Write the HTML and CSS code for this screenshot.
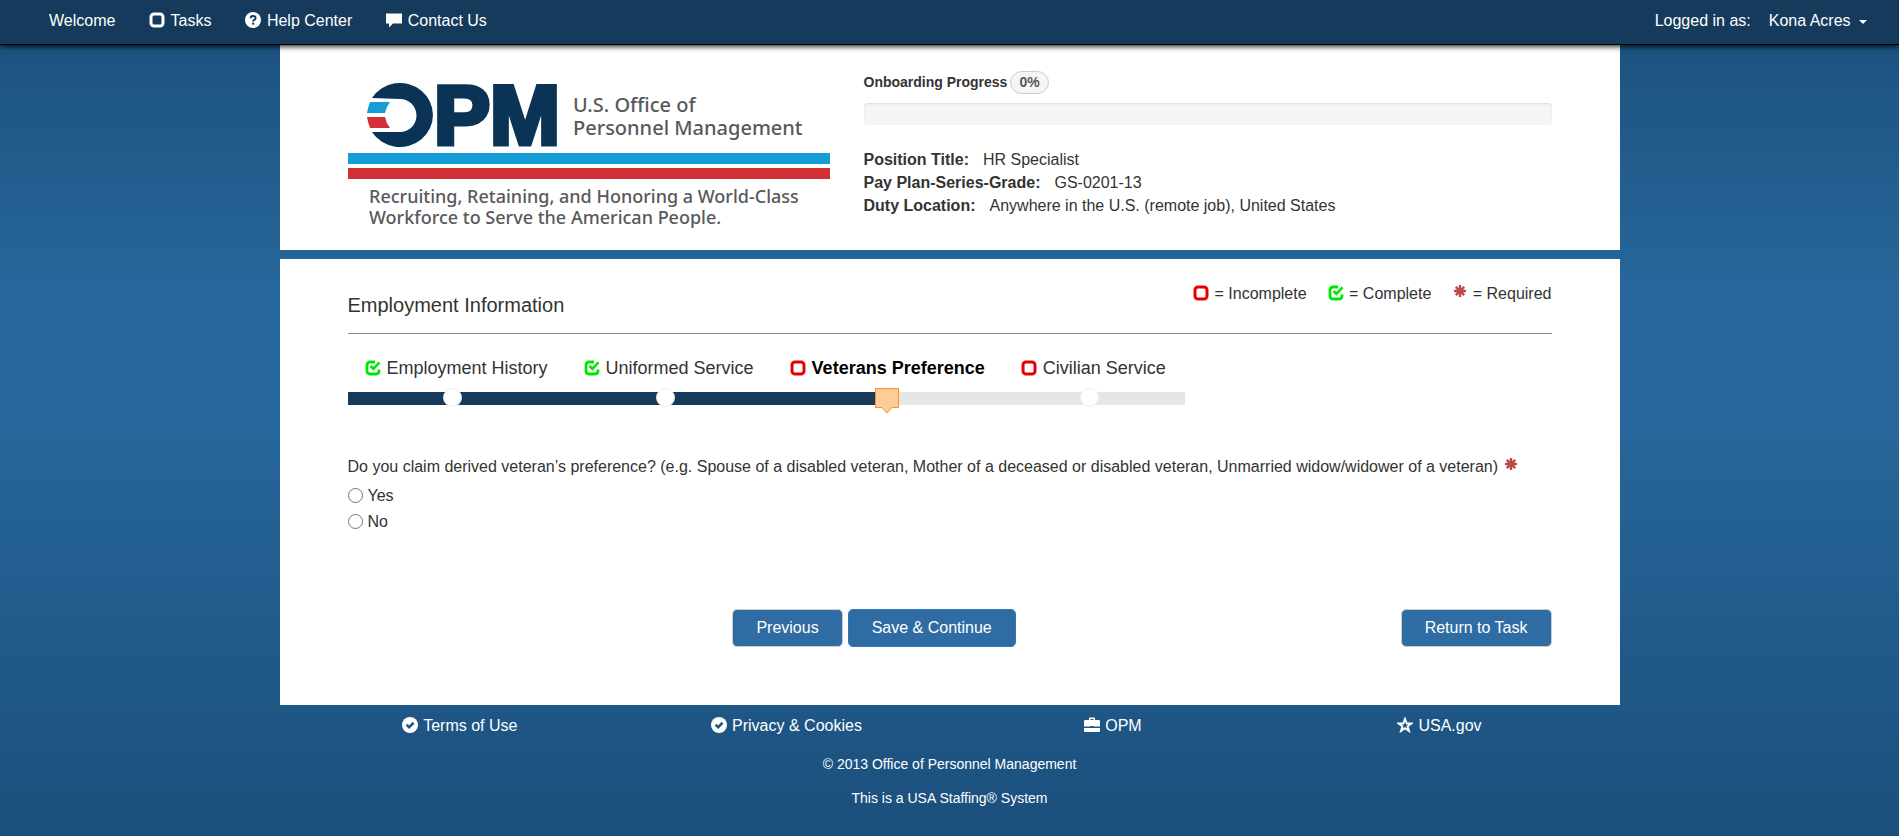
FILE: index.html
```
<!DOCTYPE html>
<html lang="en">
  <head>
    <meta charset="UTF-8" />
    <meta name="viewport" content="width=device-width, initial-scale=1.0" />
    <title>Veterans Preference - USA Staffing Onboarding</title>
    <link rel="stylesheet" href="styles.css">
  </head>
  <body>
    <!-- Shared icons -->
    <svg class="sprite" aria-hidden="true">
      <symbol id="unchecked" viewBox="0 0 16 16">
        <rect x="2" y="2" width="12" height="12" rx="3" fill="none" stroke="currentColor" stroke-width="3" />
      </symbol>
      <symbol id="check" viewBox="0 0 16 16">
        <path d="M10 2H5Q2 2 2 5V11Q2 14 5 14H11Q14 14 14 11V9.500" fill="none" stroke="currentColor" stroke-width="2.800" />
        <path d="M5.500 6L8.400 8.800L14.500 2.400" fill="none" stroke="currentColor" stroke-width="2.600" />
      </symbol>
      <symbol id="question" viewBox="0 0 16 16">
        <circle cx="8" cy="8" r="8" fill="currentColor" />
        <path d="M5.600 6.300Q5.600 3.900 8.100 3.900Q10.600 3.900 10.600 5.900Q10.600 7.100 9.300 7.800Q8.200 8.400 8.200 9.500" fill="none" stroke="#153a5b" stroke-width="2" />
        <path d="M7.100 10.600h2.200v2h-2.200z" fill="#153a5b" />
      </symbol>
      <symbol id="comment" viewBox="0 0 16 16">
        <path d="M0 1.500H16V11.500H7L3 15.500V11.500H0Z" fill="currentColor" />
      </symbol>
      <symbol id="ok" viewBox="0 0 16 16">
        <circle cx="8" cy="8" r="8" fill="currentColor" />
        <path d="M4.600 7.700L7.200 10.100L11.600 5.800" fill="none" stroke="#20598a" stroke-width="2.600" />
      </symbol>
      <symbol id="briefcase" viewBox="0 0 16 16">
        <path d="M5 3V1.500Q5 .5 6 .5H10Q11 .5 11 1.500V3H15Q16 3 16 4V9.500H9.500V9H6.500V9.500H0V4Q0 3 1 3ZM6.500 3H9.500V2H6.500ZM0 11H16V14Q16 15 15 15H1Q0 15 0 14Z" fill="currentColor" />
      </symbol>
      <symbol id="star" viewBox="0 0 16 16">
        <path d="M8 1.800L9.700 6.500H14.300L10.600 9.300L12 14L8 11.200L4 14L5.400 9.300L1.700 6.500H6.300Z" fill="none" stroke="currentColor" stroke-width="1.900" />
      </symbol>
      <symbol id="asterisk" viewBox="0 0 16 16">
        <path d="M8 2V14M2 8H14M3.800 3.800L12.200 12.200M12.200 3.800L3.800 12.200" stroke="currentColor" stroke-width="2.400" />
      </symbol>
    </svg>

    <!-- Top Navigation -->
    <nav class="navbar">
      <ul class="nav">
        <li><a href="#">Welcome</a></li>
        <li><a href="#"><svg class="icon"><use href="#unchecked" /></svg> Tasks</a></li>
        <li><a href="#"><svg class="icon"><use href="#question" /></svg> Help Center</a></li>
        <li><a href="#"><svg class="icon"><use href="#comment" /></svg> Contact Us</a></li>
      </ul>
      <div class="user">
        <span>Logged in as:</span>
        <button type="button" class="user-menu">Kona Acres <span class="caret"></span></button>
      </div>
    </nav>

    <div class="container">
      <!-- Agency / Position Header -->
      <header class="panel agency">
        <svg class="logo" viewBox="0 -30 482 178" role="img" aria-label="U.S. Office of Personnel Management">
          <path d="M24 15A33 32 0 1 1 24 49H52A16 16 0 0 0 52 16Z" fill="#0a3355" />
          <path d="M22 19H42Q38 24 37 30H19Q20 24 22 19Z" fill="#149dd6" />
          <path d="M19 34H37Q38 40 42 45H22Q20 40 19 34Z" fill="#d22f37" />
          <text class="logo-letters" x="86" y="61">PM</text>
          <text class="logo-name" x="225" y="29">U.S. Office of</text>
          <text class="logo-name" x="225" y="52">Personnel Management</text>
          <rect x="0" y="70" width="482" height="11" fill="#149dd6" />
          <rect x="0" y="85" width="482" height="11" fill="#d22f37" />
          <text class="logo-tagline" x="21" y="120">Recruiting, Retaining, and Honoring a World-Class</text>
          <text class="logo-tagline" x="21" y="141">Workforce to Serve the American People.</text>
        </svg>

        <div class="position">
          <div class="progress-label">Onboarding Progress <span class="badge">0%</span></div>
          <div class="progress"></div>
          <dl class="details">
            <div><dt>Position Title:</dt><dd>HR Specialist</dd></div>
            <div><dt>Pay Plan-Series-Grade:</dt><dd>GS-0201-13</dd></div>
            <div><dt>Duty Location:</dt><dd>Anywhere in the U.S. (remote job), United States</dd></div>
          </dl>
        </div>
      </header>

      <!-- Questionnaire -->
      <main class="panel content">
        <div class="title-row">
          <h1>Employment Information</h1>
          <ul class="legend">
            <li><svg class="icon incomplete"><use href="#unchecked" /></svg> = Incomplete</li>
            <li><svg class="icon complete"><use href="#check" /></svg> = Complete</li>
            <li><svg class="icon required"><use href="#asterisk" /></svg> = Required</li>
          </ul>
        </div>

        <ol class="steps">
          <li class="done">
            <a href="#"><svg class="icon complete"><use href="#check" /></svg> Employment History</a>
            <div class="track"><span class="dot"></span></div>
          </li>
          <li class="done">
            <a href="#"><svg class="icon complete"><use href="#check" /></svg> Uniformed Service</a>
            <div class="track"><span class="dot"></span></div>
          </li>
          <li class="current">
            <a href="#"><svg class="icon incomplete"><use href="#unchecked" /></svg> Veterans Preference</a>
            <div class="track">
              <svg class="pointer" viewBox="0 0 24 26">
                <path d="M.5 .5H23.500V19.500H17L12 25L7 19.500H.5Z" fill="#fdcc99" stroke="#f7931e" />
              </svg>
            </div>
          </li>
          <li>
            <a href="#"><svg class="icon incomplete"><use href="#unchecked" /></svg> Civilian Service</a>
            <div class="track"><span class="dot"></span></div>
          </li>
        </ol>

        <form>
          <fieldset>
            <legend>Do you claim derived veteran’s preference? (e.g. Spouse of a disabled veteran, Mother of a deceased or disabled veteran, Unmarried widow/widower of a veteran) <svg class="icon required"><use href="#asterisk" /></svg></legend>
            <label class="choice"><input type="radio" name="derived" value="yes"> Yes</label>
            <label class="choice"><input type="radio" name="derived" value="no"> No</label>
          </fieldset>

          <div class="buttons">
            <div class="main-buttons">
              <button type="button" class="btn">Previous</button>
              <button type="submit" class="btn btn-primary">Save &amp; Continue</button>
            </div>
            <button type="button" class="btn">Return to Task</button>
          </div>
        </form>
      </main>

      <!-- Footer -->
      <footer>
        <ul class="footer-links">
          <li><a href="#"><svg class="icon"><use href="#ok" /></svg> Terms of Use</a></li>
          <li><a href="#"><svg class="icon"><use href="#ok" /></svg> Privacy &amp; Cookies</a></li>
          <li><a href="#"><svg class="icon"><use href="#briefcase" /></svg> OPM</a></li>
          <li><a href="#"><svg class="icon"><use href="#star" /></svg> USA.gov</a></li>
        </ul>
        <p>© 2013 Office of Personnel Management</p>
        <p>This is a USA Staffing® System</p>
      </footer>
    </div>
  </body>
</html>
```
FILE: styles.css
```
* {
  box-sizing: border-box;
}

body {
  margin: 0;
  min-height: 100vh;
  font-family: "Liberation Sans", Arial, sans-serif;
  font-size: 16px;
  line-height: 24px;
  color: #333;
  background: linear-gradient(#1b4f7c, #27679b 35%, #27679b 50%, #1b4f7c);
}

ul,
ol,
dl,
dd,
p,
h1 {
  margin: 0;
  padding: 0;
  list-style: none;
}

a {
  color: inherit;
  text-decoration: none;
}

a:hover {
  text-decoration: underline;
}

.sprite {
  position: absolute;
  width: 0;
  height: 0;
}

.icon {
  width: 16px;
  height: 16px;
  margin-right: 1px;
  vertical-align: -2px;
}

.incomplete {
  color: #e60000;
}

.complete {
  color: #00e600;
}

.required {
  margin-right: 0;
  color: #b94a48;
  vertical-align: 0;
}

/* Top navigation */
.navbar {
  position: relative;
  display: flex;
  justify-content: space-between;
  height: 45px;
  padding: 9px 32px;
  color: #fff;
  background: #153a5b;
  border-bottom: 1px solid #000;
  box-shadow: 0 1px 6px #000;
}

.nav {
  display: flex;
}

.nav a {
  padding: 0 17px;
}

.user {
  display: flex;
  gap: 18px;
  align-items: flex-start;
}

.user-menu {
  padding: 0;
  font: inherit;
  color: inherit;
  background: none;
  border: 0;
}

.caret {
  display: inline-block;
  margin-left: 4px;
  vertical-align: middle;
  border-top: 4px solid #fff;
  border-right: 4px solid transparent;
  border-left: 4px solid transparent;
}

/* Panels */
.container {
  max-width: 1340px;
  margin: 0 auto;
}

.panel {
  padding-right: 68px;
  padding-left: 68px;
  background: #fff;
}

.agency {
  display: flex;
  gap: 34px;
  align-items: flex-start;
  padding-top: 8px;
  padding-bottom: 19px;
  margin-bottom: 9px;
}

.logo {
  flex: 0 0 482px;
  height: 178px;
}

.logo text {
  font-family: "Noto Sans", sans-serif;
  font-weight: 500;
  fill: #58595b;
}

.logo .logo-letters {
  font-family: "Liberation Sans", Arial, sans-serif;
  font-size: 84px;
  font-weight: bold;
  fill: #0a3355;
  stroke: #0a3355;
  stroke-width: 5px;
}

.logo .logo-name {
  font-size: 20px;
}

.logo .logo-tagline {
  font-size: 18px;
}

.position {
  flex: 1;
  padding-top: 17px;
}

.progress-label {
  display: flex;
  gap: 3px;
  align-items: center;
  font-size: 14px;
  font-weight: bold;
}

.badge {
  padding: 0 8px;
  line-height: 21px;
  color: #555;
  background: #f5f5f5;
  border: 1px solid #ccc;
  border-radius: 12px;
}

.progress {
  height: 22px;
  margin: 9px 0 23px;
  background: #f5f5f5;
  border-radius: 4px;
  box-shadow: inset 0 1px 2px rgba(0, 0, 0, 0.1);
}

.details {
  line-height: 23px;
}

.details div {
  display: flex;
  gap: 14px;
}

.details dt {
  font-weight: bold;
}

.content {
  padding-top: 23px;
  padding-bottom: 58px;
}

.title-row {
  display: flex;
  justify-content: space-between;
  padding-bottom: 16px;
  border-bottom: 1px solid #888;
}

h1 {
  margin-top: 11px;
  font-size: 20px;
  font-weight: normal;
}

.legend {
  display: flex;
  gap: 21px;
}

/* Step tracker */
.steps {
  display: flex;
  margin-top: 22px;
  font-size: 18px;
}

.steps a {
  display: block;
  padding: 0 19px 0 17px;
}

.track {
  position: relative;
  height: 13px;
  margin-top: 12px;
  background: #e6e6e6;
}

.done .track {
  background: #153a5b;
}

.current a {
  font-weight: bold;
  color: #000;
}

.current .track {
  background: linear-gradient(to right, #153a5b 50%, #e6e6e6 50%);
}

.dot {
  position: absolute;
  top: -4px;
  left: calc(50% - 14px);
  width: 19px;
  height: 19px;
  background: #fff;
  border: 1px solid #eee;
  border-radius: 50%;
}

.pointer {
  position: absolute;
  top: -4px;
  left: calc(50% - 13px);
  width: 24px;
  height: 26px;
}

/* Question */
fieldset {
  min-width: 0;
  margin: 50px 0 0;
  padding: 0;
  border: 0;
}

legend {
  padding: 0;
  margin-bottom: 5px;
}

.choice {
  display: flex;
  gap: 5px;
  width: max-content;
  height: 26px;
}

.choice input {
  width: 15px;
  height: 15px;
  margin: 4px 0 0;
}

.buttons {
  display: flex;
  align-items: center;
  margin-top: 73px;
}

.main-buttons {
  display: flex;
  flex: 1;
  gap: 5px;
  justify-content: center;
}

.btn {
  padding: 6px 23px;
  font: inherit;
  line-height: 24px;
  color: #fff;
  background: #2f6ca3;
  border: 1px solid #ccc;
  border-radius: 5px;
}

.btn-primary {
  border-color: #337ab7;
}

/* Footer */
footer {
  padding: 9px 17px;
  color: #fff;
  text-align: center;
}

.footer-links {
  display: grid;
  grid-template-columns: repeat(4, 1fr);
  margin-bottom: 14px;
}

footer p {
  margin-bottom: 10px;
  font-size: 14px;
}
```
